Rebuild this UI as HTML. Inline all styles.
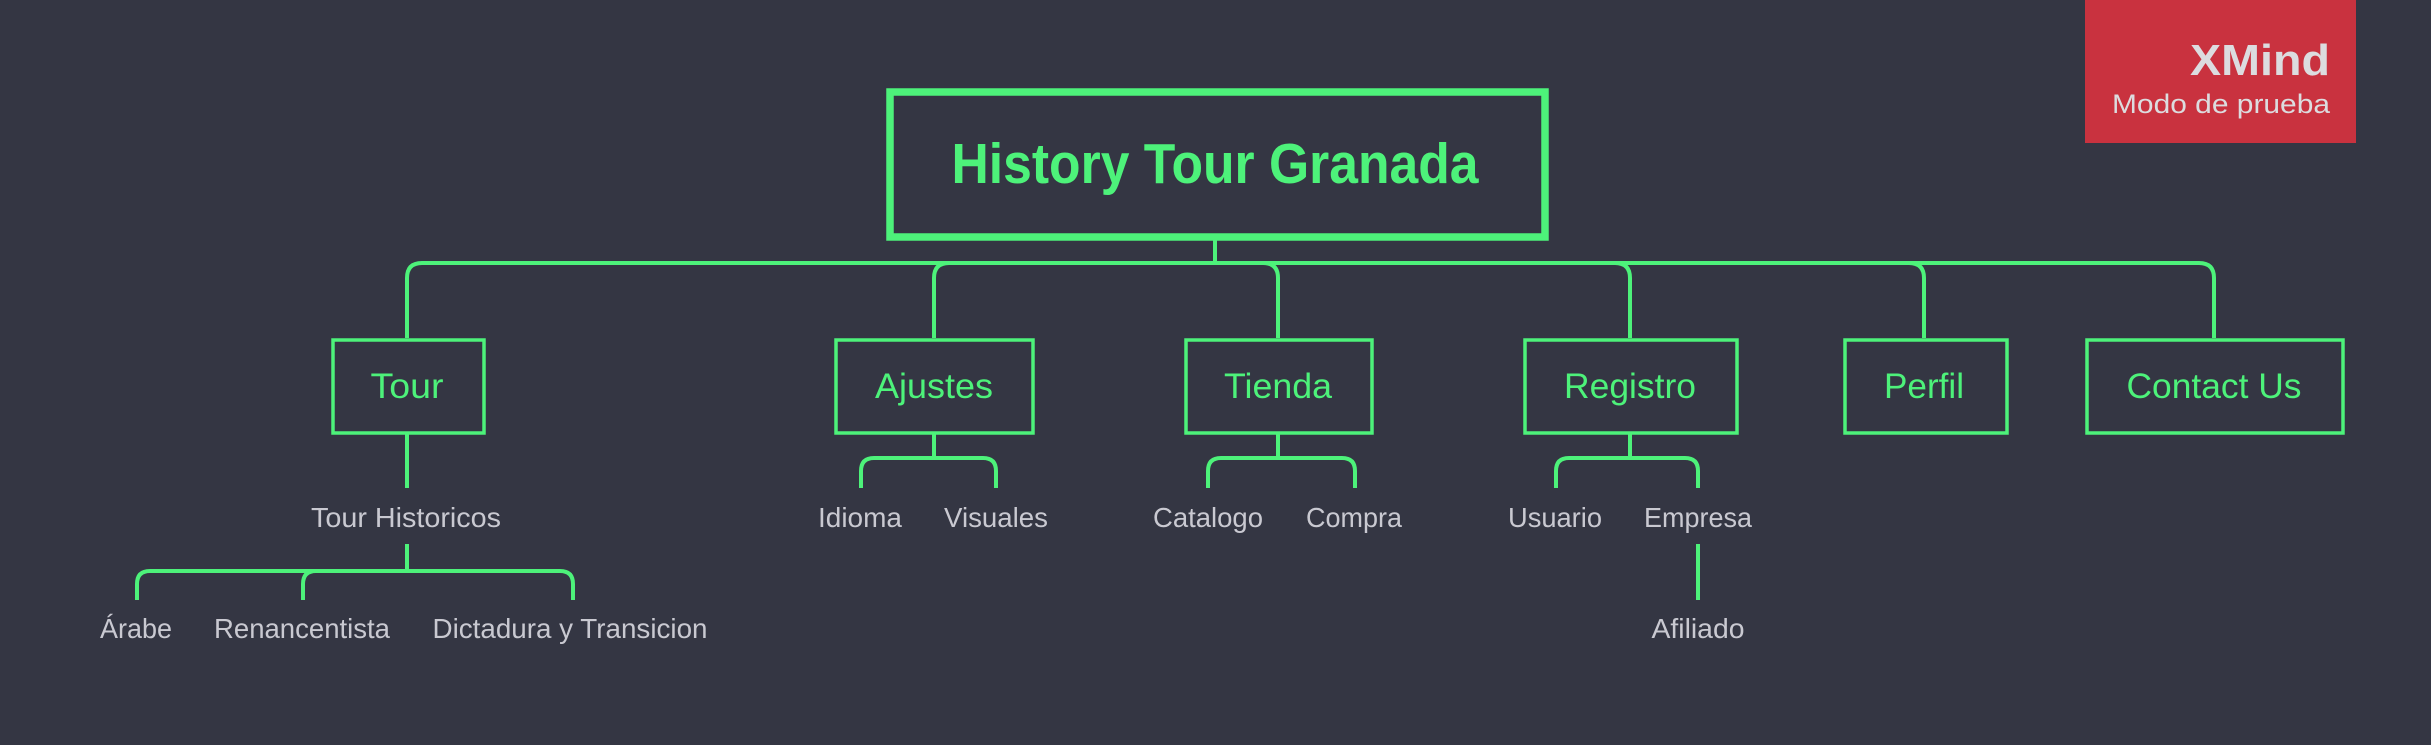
<!DOCTYPE html>
<html><head><meta charset="utf-8"><style>
html,body{margin:0;padding:0;background:#343643;}
svg{display:block}
text{font-family:"Liberation Sans",sans-serif}
</style></head><body>
<svg width="2431" height="745" viewBox="0 0 2431 745" xmlns="http://www.w3.org/2000/svg">
<rect width="2431" height="745" fill="#343643"/>
<g fill="none" stroke="#4df27a" stroke-width="4">
<!-- root box -->
<rect x="890" y="92" width="655" height="145" stroke-width="7.5"/>
<line x1="1215" y1="240" x2="1215" y2="263"/>
<!-- main horizontal -->
<path d="M407 338 V278 Q407 263 422 263 H2199 Q2214 263 2214 278 V338"/>
<path d="M934 338 V278 Q934 263 949 263"/>
<path d="M1278 338 V278 Q1278 263 1263 263"/>
<path d="M1630 338 V278 Q1630 263 1615 263"/>
<path d="M1924 338 V278 Q1924 263 1909 263"/>
<!-- child boxes -->
<rect x="333" y="340" width="151" height="93" stroke-width="3.5"/>
<rect x="836" y="340" width="197" height="93" stroke-width="3.5"/>
<rect x="1186" y="340" width="186" height="93" stroke-width="3.5"/>
<rect x="1525" y="340" width="212" height="93" stroke-width="3.5"/>
<rect x="1845" y="340" width="162" height="93" stroke-width="3.5"/>
<rect x="2087" y="340" width="256" height="93" stroke-width="3.5"/>
<!-- Tour subtree -->
<line x1="407" y1="434" x2="407" y2="488"/>
<line x1="407" y1="544" x2="407" y2="571"/>
<path d="M137 600 V584 Q137 571 150 571 H560 Q573 571 573 584 V600"/>
<path d="M303 600 V584 Q303 571 316 571"/>
<!-- Ajustes -->
<line x1="934" y1="434" x2="934" y2="458"/>
<path d="M861 488 V471 Q861 458 874 458 H983 Q996 458 996 471 V488"/>
<!-- Tienda -->
<line x1="1278" y1="434" x2="1278" y2="458"/>
<path d="M1208 488 V471 Q1208 458 1221 458 H1342 Q1355 458 1355 471 V488"/>
<!-- Registro -->
<line x1="1630" y1="434" x2="1630" y2="458"/>
<path d="M1556 488 V471 Q1556 458 1569 458 H1685 Q1698 458 1698 471 V488"/>
<line x1="1698" y1="544" x2="1698" y2="600"/>
</g>
<g fill="#4df27a" text-anchor="middle">
<text x="1215" y="183" font-size="57" font-weight="bold" textLength="527" lengthAdjust="spacingAndGlyphs">History Tour Granada</text>
<text x="407" y="398" font-size="35" textLength="73" lengthAdjust="spacingAndGlyphs">Tour</text>
<text x="934" y="398" font-size="35" textLength="118" lengthAdjust="spacingAndGlyphs">Ajustes</text>
<text x="1278" y="398" font-size="35" textLength="108" lengthAdjust="spacingAndGlyphs">Tienda</text>
<text x="1630" y="398" font-size="35" textLength="132" lengthAdjust="spacingAndGlyphs">Registro</text>
<text x="1924" y="398" font-size="35" textLength="80" lengthAdjust="spacingAndGlyphs">Perfil</text>
<text x="2214" y="398" font-size="35" textLength="175" lengthAdjust="spacingAndGlyphs">Contact Us</text>
</g>
<g fill="#c9c9d1" text-anchor="middle" font-size="28">
<text x="406" y="527" textLength="190" lengthAdjust="spacingAndGlyphs">Tour Historicos</text>
<text x="136" y="638" textLength="72" lengthAdjust="spacingAndGlyphs">Árabe</text>
<text x="302" y="638" textLength="176" lengthAdjust="spacingAndGlyphs">Renancentista</text>
<text x="570" y="638" textLength="275" lengthAdjust="spacingAndGlyphs">Dictadura y Transicion</text>
<text x="860" y="527" textLength="84" lengthAdjust="spacingAndGlyphs">Idioma</text>
<text x="996" y="527" textLength="104" lengthAdjust="spacingAndGlyphs">Visuales</text>
<text x="1208" y="527" textLength="110" lengthAdjust="spacingAndGlyphs">Catalogo</text>
<text x="1354" y="527" textLength="96" lengthAdjust="spacingAndGlyphs">Compra</text>
<text x="1555" y="527" textLength="94" lengthAdjust="spacingAndGlyphs">Usuario</text>
<text x="1698" y="527" textLength="108" lengthAdjust="spacingAndGlyphs">Empresa</text>
<text x="1698" y="638" textLength="93" lengthAdjust="spacingAndGlyphs">Afiliado</text>
</g>
<rect x="2085" y="0" width="271" height="143" fill="#c9323f"/>
<g fill="#dcdcdf" text-anchor="end">
<text x="2330" y="75" font-size="44" font-weight="bold" textLength="140" lengthAdjust="spacingAndGlyphs">XMind</text>
<text x="2330" y="113" font-size="27" textLength="218" lengthAdjust="spacingAndGlyphs">Modo de prueba</text>
</g>
</svg>
</body></html>
